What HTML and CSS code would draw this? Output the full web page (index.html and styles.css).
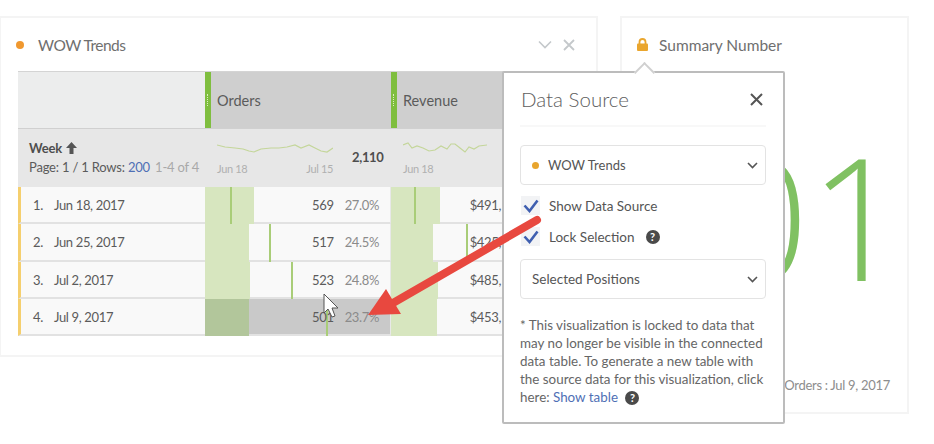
FILE: index.html
```html
<!DOCTYPE html>
<html lang="en">
  <head>
    <meta charset="UTF-8" />
    <meta name="viewport" content="width=device-width, initial-scale=1.0" />
    <title>WOW Trends</title>
    <link rel="stylesheet" href="styles.css">
  </head>
  <body>
    <div class="workspace">
      <section class="panel panel-table">
        <header class="panel-head">
          <span class="dot"></span>
          <h2>WOW Trends</h2>
          <span class="panel-tools">
            <svg width="14" height="9" viewBox="0 0 14 9"><path d="M1 1.500l6 6 6-6" fill="none" stroke="#c4c8cb" stroke-width="1.600"/></svg>
            <svg width="12" height="12" viewBox="0 0 12 12"><path d="M1 1l10 10M11 1L1 11" fill="none" stroke="#c4c8cb" stroke-width="1.800"/></svg>
          </span>
        </header>
        <div class="freeform">
          <div class="col-head col-blank"></div>
          <div class="col-head metric"><span class="grip"></span><span>Orders</span></div>
          <div class="col-head metric"><span class="grip"></span><span>Revenue</span></div>

          <div class="summary dim-summary">
            <div class="week">Week
              <svg width="11" height="12" viewBox="0 0 11 12"><path d="M5.500 0L11 6H7.500v6h-4V6H0z" fill="#555"/></svg>
            </div>
            <div class="paging">Page: 1 / 1 Rows: <a class="blue">200</a> <span class="faint">1-4 of 4</span></div>
          </div>
          <div class="summary spark-cell">
            <div class="spark">
              <svg width="116" height="14" viewBox="0 0 116 14"><polyline points="0,4 8,6 18,7 26,8 32,10 37,11 44,8 54,7 62,7 70,6 78,4 84,7 92,4 98,7 104,10 110,11 116,7" fill="none" stroke="#c4d69a" stroke-width="1.200"/></svg>
              <div class="spark-dates"><span>Jun 18</span><span>Jul 15</span></div>
            </div>
            <b class="total">2,110</b>
          </div>
          <div class="summary spark-cell">
            <div class="spark">
              <svg width="84" height="14" viewBox="0 0 84 14"><polyline points="0,4 5,2 9,7 14,5 20,7 26,10 32,9 38,5 44,8 48,3 52,3 57,7 62,11 66,6 71,8 76,5 84,4" fill="none" stroke="#c4d69a" stroke-width="1.200"/></svg>
              <div class="spark-dates"><span>Jun 18</span></div>
            </div>
          </div>

          <div class="dim"><span class="num">1.</span><span>Jun 18, 2017</span></div>
          <div class="cell">
            <span class="bar" style="width: 49px"></span><span class="tick" style="left: 25px"></span>
            <span class="val">569</span><span class="pct">27.0%</span>
          </div>
          <div class="cell clipped">
            <span class="bar" style="width: 49px"></span><span class="tick" style="left: 23px"></span>
            <span class="val">$491,</span>
          </div>

          <div class="dim"><span class="num">2.</span><span>Jun 25, 2017</span></div>
          <div class="cell">
            <span class="bar" style="width: 44px"></span><span class="tick" style="left: 64px"></span>
            <span class="val">517</span><span class="pct">24.5%</span>
          </div>
          <div class="cell clipped">
            <span class="bar" style="width: 42px"></span><span class="tick" style="left: 75px"></span>
            <span class="val">$425,</span>
          </div>

          <div class="dim"><span class="num">3.</span><span>Jul 2, 2017</span></div>
          <div class="cell">
            <span class="bar" style="width: 45px"></span><span class="tick" style="left: 86px"></span>
            <span class="val">523</span><span class="pct">24.8%</span>
          </div>
          <div class="cell clipped">
            <span class="bar" style="width: 47px"></span>
            <span class="val">$485,</span>
          </div>

          <div class="dim"><span class="num">4.</span><span>Jul 9, 2017</span></div>
          <div class="cell selected">
            <span class="bar" style="width: 44px"></span><span class="tick" style="left: 121px"></span>
            <span class="val">501</span><span class="pct">23.7%</span>
          </div>
          <div class="cell clipped">
            <span class="bar" style="width: 46px"></span>
            <span class="val">$453,</span>
          </div>
        </div>
      </section>

      <section class="panel panel-summary">
        <header class="panel-head">
          <svg class="lock" width="11" height="13" viewBox="0 0 11 13"><path d="M2.500 6V4a3 3 0 0 1 6 0v2" fill="none" stroke="#eaa62e" stroke-width="1.800"/><rect y="5.500" width="11" height="7.500" rx="1" fill="#eaa62e"/></svg>
          <h2>Summary Number</h2>
        </header>
        <div class="big-number">501</div>
        <div class="summary-note">Orders : Jul 9, 2017</div>
      </section>
    </div>

    <aside class="popover">
      <span class="notch"></span>
      <div class="popover-head">
        <h3>Data Source</h3>
        <svg width="13" height="13" viewBox="0 0 13 13"><path d="M1 1l11 11M12 1L1 12" fill="none" stroke="#555" stroke-width="2"/></svg>
      </div>
      <div class="select">
        <span class="dot small"></span><span class="select-name">WOW Trends</span>
        <svg class="chevron" width="11" height="7" viewBox="0 0 11 7"><path d="M1 1l4.500 4.500L10 1" fill="none" stroke="#555" stroke-width="1.600"/></svg>
      </div>
      <div class="check-row">
        <span class="check"><svg width="16" height="14" viewBox="0 0 16 14"><path d="M1.500 6.500l5 5.500L14.500 1.500" fill="none" stroke="#3f5fb0" stroke-width="2.600"/></svg></span>
        <span>Show Data Source</span>
      </div>
      <div class="check-row">
        <span class="check"><svg width="16" height="14" viewBox="0 0 16 14"><path d="M1.500 6.500l5 5.500L14.500 1.500" fill="none" stroke="#3f5fb0" stroke-width="2.600"/></svg></span>
        <span>Lock Selection</span>
        <span class="help">?</span>
      </div>
      <div class="select second">
        <span>Selected Positions</span>
        <svg class="chevron" width="11" height="7" viewBox="0 0 11 7"><path d="M1 1l4.500 4.500L10 1" fill="none" stroke="#555" stroke-width="1.600"/></svg>
      </div>
      <p class="note">* This visualization is locked to data that may no longer be visible in the connected data table. To generate a new table with the source data for this visualization, click here: <a class="blue">Show table</a> <span class="help">?</span></p>
    </aside>

    <svg class="cursor" width="16" height="26" viewBox="0 0 16 26"><path d="M1 1v19l4-4 4 8 3-1-3-8h6z" fill="#fff" stroke="#555" stroke-width="1"/></svg>

    <svg class="callout" width="180" height="106" viewBox="0 0 180 106">
      <path d="M170 6L26 89" fill="none" stroke="#e8483f" stroke-width="8" stroke-linecap="round"/>
      <path d="M1 101L19 75 34 100z" fill="#e8483f"/>
    </svg>
  </body>
</html>
```

FILE: styles.css
```css
body {
  font-family: Lato, "Open Sans", sans-serif;
  margin: 0;
  padding: 0;
  background-color: #fff;
  color: #5b5b5b;
  font-size: 13.500px;
  height: 444px;
  overflow: hidden;
  position: relative;
}
.workspace {
  display: flex;
  align-items: flex-start;
  gap: 22px;
  padding-top: 16px;
}
.panel {
  background-color: #fff;
  border: 2px solid #f4f4f4;
  box-sizing: border-box;
}
.panel-table {
  width: 598px;
  height: 341px;
  border-left-width: 1px;
  padding: 0 18px 0 17px;
}
.panel-summary {
  width: 289px;
  height: 398px;
  padding: 0 16px 0 14px;
  overflow: hidden;
}
.panel-head {
  display: flex;
  align-items: center;
  height: 53px;
}
.panel-head h2 {
  margin: 0;
  font-size: 15.500px;
  font-weight: 400;
  color: #6f6f6f;
}
.panel-table .panel-head {
  gap: 14px;
  margin-left: -2px;
}
.panel-table .panel-head h2 {
  letter-spacing: -0.5px;
}
.panel-summary .panel-head {
  gap: 11px;
}
.panel-tools {
  margin-left: auto;
  display: flex;
  align-items: center;
  gap: 11px;
  margin-right: 3px;
}
.dot {
  width: 8px;
  height: 8px;
  border-radius: 50%;
  background-color: #f0982f;
}
.dot.small {
  width: 7px;
  height: 7px;
  background-color: #e8a52e;
}
.freeform {
  display: grid;
  grid-template-columns: 187px 186px 187px;
  grid-template-rows: 57px 58px 37px 38px 37px 37px;
  border-top: 1px solid #d4d4d4;
  font-size: 13px;
  letter-spacing: -0.35px;
}
.col-head {
  border-bottom: 1px solid #d0d0d0;
  box-sizing: border-box;
}
.col-blank {
  background-color: #eceded;
}
.metric {
  background-color: #cfcfcf;
  display: flex;
  align-items: center;
  gap: 6px;
  font-size: 14.500px;
  letter-spacing: 0;
}
.grip {
  width: 6px;
  height: 100%;
  background-color: #7fbe3f;
  display: flex;
  align-items: center;
  justify-content: center;
}
.grip::after {
  content: "";
  width: 1px;
  height: 12px;
  border-left: 1px dotted #dcefbf;
}
.summary {
  background-color: #e7e7e7;
  box-sizing: border-box;
}
.dim-summary {
  padding: 11px 0 0 11px;
  white-space: nowrap;
  letter-spacing: -0.2px;
}
.week {
  font-weight: 700;
  color: #4e4e4e;
  display: flex;
  align-items: center;
  gap: 4px;
  margin-bottom: 3px;
}
.blue {
  color: #4f6fb5;
}
.faint {
  color: #a9a9a9;
  margin-left: 2px;
}
.spark-cell {
  display: flex;
  align-items: flex-start;
  padding-left: 12px;
  gap: 19px;
}
.spark {
  padding-top: 12px;
}
.spark svg {
  display: block;
}
.spark-dates {
  display: flex;
  justify-content: space-between;
  margin-top: 7px;
  font-size: 11px;
  color: #b0b0b0;
}
.total {
  font-size: 13px;
  color: #4e4e4e;
  margin-top: 20px;
}
.dim {
  display: flex;
  align-items: center;
  background-color: #f9f9f9;
  border-left: 3px solid #f5cf6e;
  border-bottom: 2px solid #e2e2e2;
  box-sizing: border-box;
  padding-left: 12px;
}
.num {
  width: 21px;
}
.cell {
  position: relative;
  display: flex;
  align-items: center;
  justify-content: flex-end;
  gap: 11px;
  background-color: #f9f9f9;
  border-bottom: 2px solid #e2e2e2;
  border-right: 1px solid #e8e8e8;
  box-sizing: border-box;
  padding-right: 11px;
}
.cell.clipped {
  padding-right: 76px;
}
.cell.selected {
  background-color: #c9c9c9;
}
.bar {
  position: absolute;
  left: 0;
  top: 0;
  bottom: -2px;
  background-color: #d7e6bf;
}
.selected .bar {
  background-color: #b2c69b;
}
.tick {
  position: absolute;
  top: 0;
  bottom: -2px;
  width: 2px;
  background-color: #a9cd78;
}
.val,
.pct {
  position: relative;
}
.pct {
  color: #8b8b8b;
}
.big-number {
  font-family: "Open Sans", sans-serif;
  font-size: 170px;
  font-weight: 300;
  line-height: 1;
  color: #80c162;
  text-align: right;
  margin-top: 59px;
  margin-right: -15px;
  margin-left: -100px;
  white-space: nowrap;
}
.summary-note {
  margin-top: 77px;
  color: #8d8d8d;
  font-size: 13px;
  letter-spacing: -0.3px;
  text-align: right;
  margin-right: 1px;
}
.lock {
  margin-left: 1px;
}
.popover {
  position: absolute;
  left: 502px;
  top: 71px;
  width: 283px;
  height: 353px;
  box-sizing: border-box;
  background-color: #fff;
  border: 2px solid #bcbcbc;
  border-radius: 2px;
  padding: 0 17px 0 16px;
}
.notch {
  position: absolute;
  left: 133px;
  top: -8px;
  width: 13px;
  height: 13px;
  background-color: #fff;
  border-left: 2px solid #d0d0d0;
  border-top: 2px solid #d0d0d0;
  transform: rotate(45deg);
}
.popover-head {
  display: flex;
  align-items: center;
  justify-content: space-between;
  height: 52px;
  padding: 0 3px 0 1px;
  border-bottom: 2px solid #f8f8f8;
  margin-bottom: 18px;
  position: relative;
}
.popover-head h3 {
  margin: 0;
  font-size: 20.500px;
  font-weight: 300;
  color: #5e5e5e;
}
.select {
  display: flex;
  align-items: center;
  gap: 9px;
  height: 40px;
  box-sizing: border-box;
  border: 1px solid #e3e3e3;
  border-radius: 4px;
  padding: 0 7px 0 11px;
  margin-bottom: 5px;
  color: #555;
}
.select-name {
  font-size: 13px;
}
.select .chevron {
  margin-left: auto;
}
.select.second {
  margin: 7px 0 17px;
}
.check-row {
  display: flex;
  align-items: center;
  height: 31px;
  gap: 9px;
  margin-left: 1px;
  color: #555;
}
.check {
  display: flex;
  align-items: center;
  justify-content: center;
  width: 19px;
  height: 19px;
  background-color: #f2f3f5;
}
.help {
  display: inline-flex;
  align-items: center;
  justify-content: center;
  width: 14px;
  height: 14px;
  border-radius: 50%;
  background-color: #4a4a4a;
  color: #fff;
  font-size: 11px;
  line-height: 14px;
  font-weight: 700;
  margin-left: 4px;
  vertical-align: 0;
}
.check-row .help {
  margin-left: 2px;
}
.note {
  margin: 0;
  font-size: 13.400px;
  line-height: 18px;
  color: #666;
}
.cursor {
  position: absolute;
  left: 323px;
  top: 293px;
}
.callout {
  position: absolute;
  left: 367px;
  top: 214px;
}
```
